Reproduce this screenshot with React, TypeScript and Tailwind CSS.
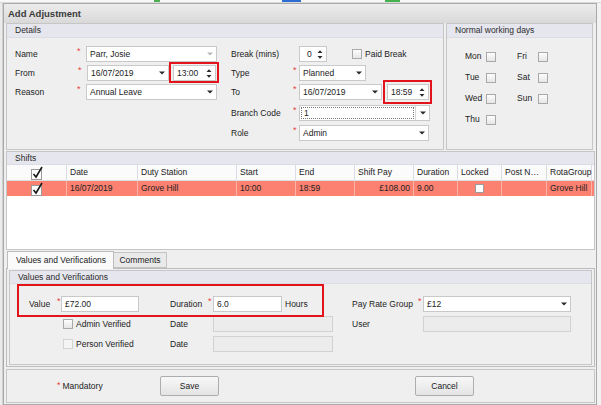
import React from 'react';

const font = "font-['Liberation_Sans',Arial,sans-serif]";

function Caret({ light }: { light?: boolean }) {
  return (
    <svg width="6" height="4" viewBox="0 0 6 4" className="shrink-0">
      <path d="M0 0.5h6L3 3.5z" fill={light ? '#b8b8b8' : '#2a2a2a'} />
    </svg>
  );
}

function Spin() {
  return (
    <svg width="6" height="11" viewBox="0 0 6 11" className="shrink-0">
      <path d="M0.5 4h5L3 1.2z" fill="#2a2a2a" />
      <path d="M0.5 7h5L3 9.8z" fill="#2a2a2a" />
    </svg>
  );
}

function Ast({ className = 'w-[9px]' }: { className?: string }) {
  return (
    <span className={`${className} shrink-0 self-start pt-[1px] text-[#e84040] text-[9px] leading-[9px]`}>*</span>
  );
}

function Field({ className = '', children, disabled }: { className?: string; children?: React.ReactNode; disabled?: boolean }) {
  return (
    <div
      className={`${className} h-[16px] shrink-0 border flex items-center justify-between pl-[3px] pr-[3px] ${
        disabled ? 'bg-[#ececec] border-[#d2d2d2]' : 'bg-white border-[#c9c9c9]'
      }`}
    >
      {children}
    </div>
  );
}

function Check({ faded }: { faded?: boolean }) {
  return (
    <div
      className={`w-[10px] h-[10px] shrink-0 border ${
        faded ? 'border-[#d4d4d4] bg-[#f4f4f4]' : 'border-[#a9a9a9] bg-gradient-to-b from-[#fdfdfd] to-[#e6e6e6]'
      }`}
    />
  );
}

function Tick() {
  return (
    <svg width="14" height="14" viewBox="0 0 14 14">
      <rect x="1.5" y="3.5" width="10" height="10" fill="#fff" stroke="#9a9a9a" />
      <path d="M3.5 8l2.5 3L12 1" fill="none" stroke="#1a1a1a" strokeWidth="1.6" />
    </svg>
  );
}

function GroupHeader({ title, className = 'h-[14px]' }: { title: string; className?: string }) {
  return (
    <div className={`${className} bg-[#e6e6ee] border-b border-[#dcdce4] flex items-center pl-[8px] text-[#2b2b2b]`}>
      {title}
    </div>
  );
}

function Details() {
  return (
    <div className="w-[438px] h-full border border-[#c6c6c6] flex flex-col">
      <GroupHeader title="Details" />
      <div className="flex pl-[8px] pt-[8px]">
        {/* left column */}
        <div className="w-[202px] flex flex-col gap-[3px]">
          <div className="flex items-center h-[16px]">
            <span className="w-[63px]">Name</span>
            <Ast />
            <Field className="w-[131px]">
              <span>Parr, Josie</span>
              <Caret light />
            </Field>
          </div>
          <div className="flex items-center h-[16px]">
            <span className="w-[63px]">From</span>
            <Ast />
            <Field className="w-[82px]">
              <span>16/07/2019</span>
              <Caret />
            </Field>
            <div className="relative ml-[4px]">
              <Field className="w-[43px]">
                <span>13:00</span>
                <Spin />
              </Field>
              <div className="absolute -left-[4px] -top-[3px] -right-[3px] -bottom-[2px] border-2 border-[#e3131b]" />
            </div>
          </div>
          <div className="flex items-center h-[16px]">
            <span className="w-[63px]">Reason</span>
            <Ast />
            <Field className="w-[131px]">
              <span>Annual Leave</span>
              <Caret />
            </Field>
          </div>
        </div>

        {/* right column */}
        <div className="ml-[14px] flex flex-col">
          <div className="flex items-center h-[16px]">
            <span className="w-[68px]">Break (mins)</span>
            <Field className="w-[28px]">
              <span className="pl-[4px]">0</span>
              <Spin />
            </Field>
            <div className="ml-[25px] flex items-center gap-[3px]">
              <Check />
              <span>Paid Break</span>
            </div>
          </div>
          <div className="flex items-center h-[16px] mt-[3px]">
            <span className="w-[62px]">Type</span>
            <Ast className="w-[6px]" />
            <Field className="w-[67px]">
              <span>Planned</span>
              <Caret />
            </Field>
          </div>
          <div className="flex items-center h-[16px] mt-[3px]">
            <span className="w-[62px]">To</span>
            <Ast className="w-[6px]" />
            <Field className="w-[83px]">
              <span>16/07/2019</span>
              <Caret />
            </Field>
            <div className="relative ml-[5px]">
              <Field className="w-[42px]">
                <span>18:59</span>
                <Spin />
              </Field>
              <div className="absolute -left-[4px] -top-[4px] -right-[3px] -bottom-[4px] border-2 border-[#e3131b]" />
            </div>
          </div>
          <div className="flex items-center h-[16px] mt-[5px]">
            <span className="w-[62px]">Branch Code</span>
            <Ast className="w-[6px]" />
            <div className="w-[131px] h-[16px] bg-white border border-[#c9c9c9] flex">
              <div className="flex-1 m-[1px] border border-dotted border-[#777] flex items-center pl-[2px]">1</div>
              <div className="w-[14px] border-l border-[#d6d6d6] flex items-center justify-center">
                <Caret />
              </div>
            </div>
          </div>
          <div className="flex items-center h-[16px] mt-[4px]">
            <span className="w-[62px]">Role</span>
            <Ast className="w-[6px]" />
            <Field className="w-[130px]">
              <span>Admin</span>
              <Caret />
            </Field>
          </div>
        </div>
      </div>
    </div>
  );
}

function WorkingDays() {
  const rows: [string, string | null][] = [
    ['Mon', 'Fri'],
    ['Tue', 'Sat'],
    ['Wed', 'Sun'],
    ['Thu', null],
  ];
  return (
    <div className="w-[147px] h-full border border-[#c6c6c6] flex flex-col">
      <GroupHeader title="Normal working days" />
      <div className="pl-[18px] pt-[8px] flex flex-col">
        {rows.map(([a, b]) => (
          <div key={a} className="h-[21px] flex items-center">
            <span className="w-[21px]">{a}</span>
            <Check />
            {b && (
              <>
                <span className="w-[21px] ml-[21px]">{b}</span>
                <Check />
              </>
            )}
          </div>
        ))}
      </div>
    </div>
  );
}

const cols = [
  { w: 'w-[60px]', h: '', d: '' },
  { w: 'w-[71px]', h: 'Date', d: '16/07/2019' },
  { w: 'w-[99px]', h: 'Duty Station', d: 'Grove Hill' },
  { w: 'w-[59px]', h: 'Start', d: '10:00' },
  { w: 'w-[59px]', h: 'End', d: '18:59' },
  { w: 'w-[59px]', h: 'Shift Pay', d: '£108.00' },
  { w: 'w-[44px]', h: 'Duration', d: '9.00' },
  { w: 'w-[44px]', h: 'Locked', d: '' },
  { w: 'w-[45px]', h: 'Post N…', d: '' },
  { w: 'w-[45px]', h: 'RotaGroup', d: 'Grove Hill' },
];

function Shifts() {
  return (
    <div className="h-[99px] border border-[#c6c6c6] flex flex-col">
      <GroupHeader title="Shifts" className="h-[13px]" />
      <div className="flex-1 bg-white flex flex-col">
        <div className="h-[16px] flex border-b border-[#dcdce4] bg-[#fbfbfb]">
          {cols.map((c, i) => (
            <div key={i} className={`${c.w} border-r border-[#dcdce4] flex items-center ${i === 0 ? 'justify-center' : 'pl-[3px]'}`}>
              {i === 0 ? <Tick /> : c.h}
            </div>
          ))}
        </div>
        <div className="h-[15px] flex bg-[#fd8170]">
          {cols.map((c, i) => (
            <div
              key={i}
              className={`${c.w} border-r border-[#fdb3a8] flex items-center ${
                i === 0 || i === 7 ? 'justify-center' : i === 5 ? 'justify-end pr-[3px]' : 'pl-[3px]'
              }`}
            >
              {i === 0 ? <Tick /> : i === 7 ? <div className="w-[9px] h-[9px] bg-white border border-[#9c9c9c]" /> : c.d}
            </div>
          ))}
        </div>
      </div>
    </div>
  );
}

function Values() {
  return (
    <div className="flex flex-col">
      <div className="h-[18px] flex items-end pl-[1px]">
        <div className="w-[107px] h-[18px] bg-[#fafafa] border border-b-0 border-[#bcbcbc] flex items-center pl-[8px] relative z-10 -mb-[1px]">
          Values and Verifications
        </div>
        <div className="w-[53px] h-[16px] bg-[#e9e9e9] border border-l-0 border-[#c4c4c4] flex items-center justify-center">
          Comments
        </div>
      </div>
      <div className="h-[99px] border border-[#bcbcbc] p-[1px]">
        <div className="h-full border border-[#c6c6c6] mx-[1px] flex flex-col">
          <GroupHeader title="Values and Verifications" className="h-[13px]" />
          <div className="relative pl-[19px] pt-[12px] flex flex-col gap-[4px]">
            <div className="absolute left-[7px] top-0 w-[307px] h-[33px] border-2 border-[#e3131b]" />
            <div className="flex items-center h-[16px]">
              <span className="w-[28px]">Value</span>
              <Ast className="w-[4px]" />
              <Field className="w-[78px]">
                <span>£72.00</span>
              </Field>
              <span className="w-[38px] ml-[31px]">Duration</span>
              <Ast className="w-[5px]" />
              <Field className="w-[69px]">
                <span>6.0</span>
              </Field>
              <span className="ml-[3px] w-[67px]">Hours</span>
              <span className="w-[66px]">Pay Rate Group</span>
              <Ast className="w-[5px]" />
              <Field className="w-[148px]">
                <span>£12</span>
                <Caret />
              </Field>
            </div>
            <div className="flex items-center h-[16px]">
              <div className="w-[34px]" />
              <Check />
              <span className="ml-[3px] w-[94px]">Admin Verified</span>
              <span className="w-[43px]">Date</span>
              <Field className="w-[120px]" disabled />
              <span className="ml-[19px] w-[71px]">User</span>
              <Field className="w-[148px]" disabled />
            </div>
            <div className="flex items-center h-[16px]">
              <div className="w-[34px]" />
              <Check faded />
              <span className="ml-[3px] w-[94px]">Person Verified</span>
              <span className="w-[43px]">Date</span>
              <Field className="w-[120px]" disabled />
            </div>
          </div>
        </div>
      </div>
    </div>
  );
}

function Button({ label }: { label: string }) {
  return (
    <div className="w-[59px] h-[20px] border border-[#adadad] rounded-[2px] bg-gradient-to-b from-[#f8f8f8] to-[#e4e4e4] flex items-center justify-center">
      {label}
    </div>
  );
}

export default function App() {
  return (
    <div className={`${font} text-[8.5px] leading-none text-[#222] w-[601px] h-[405px] bg-[#f2f2f2] overflow-hidden`}>
      <div className="h-[3px] flex bg-[#f7f7f7] border-b border-[#dadada]">
        <div className="ml-[154px] w-[6px] bg-[#4caf50]" />
        <div className="ml-[122px] w-[19px] bg-[#2d6cd2]" />
        <div className="ml-[84px] w-[15px] bg-[#45b14f]" />
      </div>
      <div className="flex h-[402px]">
        <div className="w-[3px] bg-[#ebebeb] border-r border-[#d0d0d0]" />
        <div className="w-[594px] h-full border border-[#a9a9a9] bg-[#efefef] flex flex-col">
          <div className="h-[19px] shrink-0 bg-gradient-to-b from-[#ececec] to-[#d9d9d9] flex items-center pl-[4px] font-bold text-[9.5px] text-[#3a3a3a]">
            Add Adjustment
          </div>
          <div className="flex-1 pl-[2px] pr-[1px] flex flex-col">
            <div className="h-[127px] flex gap-[2px]">
              <Details />
              <WorkingDays />
            </div>
            <div className="mt-[1px]">
              <Shifts />
            </div>
            <Values />
            <div className="mt-[2px] h-[34px] border border-[#c6c6c6] flex items-center">
              <div className="pl-[50px] w-[153px] flex items-start gap-[2px] self-start pt-[11px]">
                <span className="text-[#e84040] text-[9px] leading-[9px]">*</span>
                <span className="pt-[1px]">Mandatory</span>
              </div>
              <Button label="Save" />
              <div className="w-[196px]" />
              <Button label="Cancel" />
            </div>
          </div>
        </div>
      </div>
    </div>
  );
}
